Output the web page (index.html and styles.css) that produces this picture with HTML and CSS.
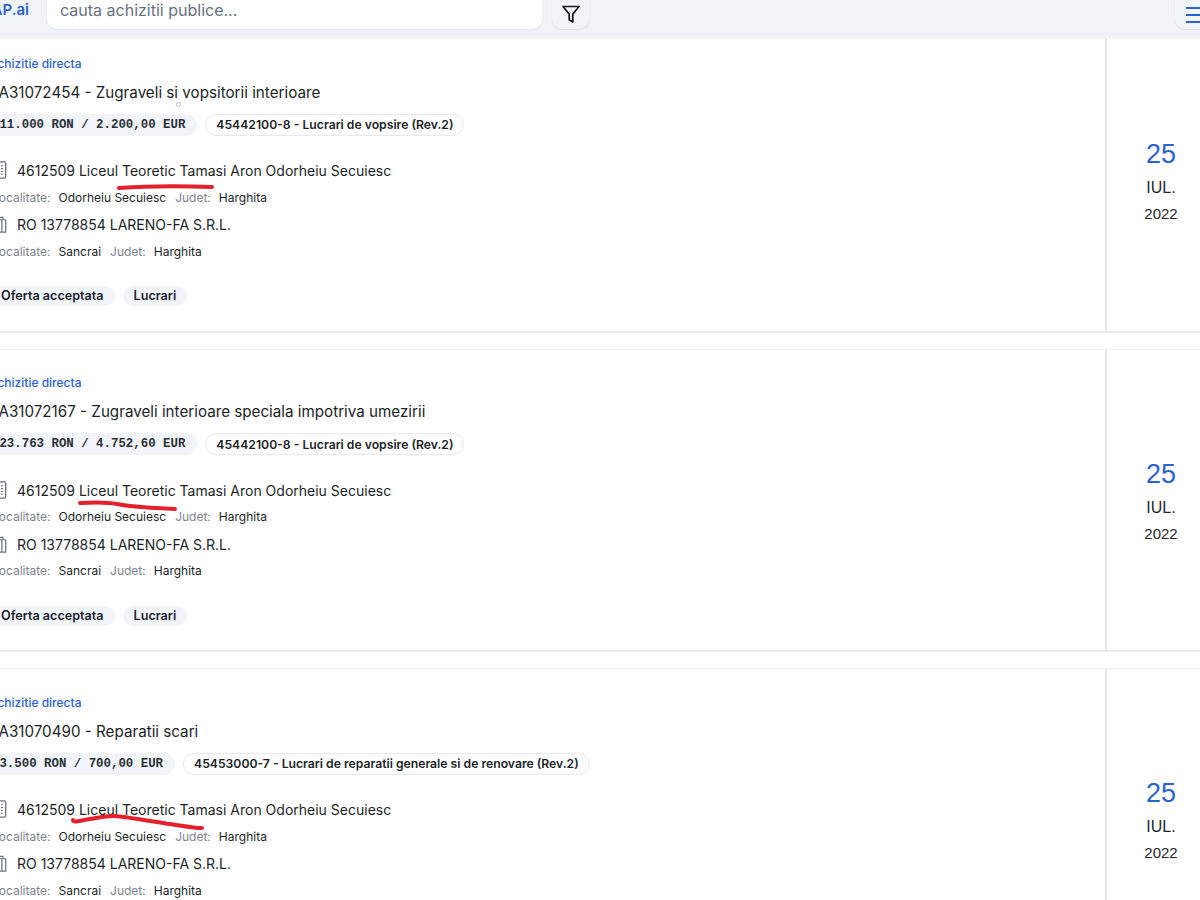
FILE: index.html
```html
<!DOCTYPE html>
<html lang="ro">
<head>
<meta charset="utf-8">
<title>SEAP.ai</title>
<link rel="stylesheet" href="styles.css">
</head>
<body>
<div class="page">
  <svg width="0" height="0" class="defs">
    <symbol id="i-building" viewBox="0 0 14 20"><rect x="1" y="1" width="12" height="17" rx="1.5" fill="none" stroke="currentColor" stroke-width="1.4"/><path d="M8 5h2M8 8h2M8 11h2M8 14h2" stroke="currentColor" stroke-width="1.2"/></symbol>
    <symbol id="i-case" viewBox="0 0 14 20"><path d="M4 5V2.500h6V5M1 5h12v13H1zM9 5v13" fill="none" stroke="currentColor" stroke-width="1.3"/></symbol>
  </svg>
  <header class="topbar">
    <div class="logo">SEAP.ai</div>
    <div class="search">cauta achizitii publice...</div>
    <button class="iconbtn filter" aria-label="filtru">
      <svg width="20" height="20" viewBox="0 0 20 20"><path d="M2 1.500h16l-6.200 7.600v7.800l-3.600-2.200V9.100z" fill="none" stroke="#15191f" stroke-width="1.700" stroke-linejoin="round"/></svg>
    </button>
    <button class="iconbtn menu" aria-label="meniu">
      <svg width="24" height="20" viewBox="0 0 24 20"><path d="M0 3h24M0 10h24M0 17h24" stroke="#2b62d0" stroke-width="2"/></svg>
    </button>
  </header>

  <main class="list">
    <article class="card">
      <div class="main">
        <div class="kind">Achizitie directa</div>
        <h2 class="title">DA31072454 - Zugraveli si vopsitorii interioare</h2>
        <div class="pills"><span class="price"><span class="pad">2</span>11.000 RON / 2.200,00 EUR</span><span class="cpv">45442100-8 - Lucrari de vopsire (Rev.2)</span></div>
        <div class="party first"><svg class="pi b"><use href="#i-building"/></svg>4612509 Liceul Teoretic Tamasi Aron Odorheiu Secuiesc</div>
        <div class="loc"><span class="k">Localitate:</span><span class="v">Odorheiu Secuiesc</span><span class="k">Judet:</span><span class="v">Harghita</span></div>
        <div class="party"><svg class="pi"><use href="#i-case"/></svg>RO 13778854 LARENO-FA S.R.L.</div>
        <div class="loc"><span class="k">Localitate:</span><span class="v">Sancrai</span><span class="k">Judet:</span><span class="v">Harghita</span></div>
        <div class="tags"><span class="tag">Oferta acceptata</span><span class="tag">Lucrari</span></div>
        <span class="ring"></span>
        <svg class="scribble s1" width="110" height="12" viewBox="0 0 110 12"><path d="M3 8C30 6 70 6 96 7" fill="none"/></svg>
      </div>
      <div class="date"><span class="day">25</span><span class="mon">IUL.</span><span class="yr">2022</span></div>
    </article>

    <article class="card">
      <div class="main">
        <div class="kind">Achizitie directa</div>
        <h2 class="title">DA31072167 - Zugraveli interioare speciala impotriva umezirii</h2>
        <div class="pills"><span class="price"><span class="pad">2</span>23.763 RON / 4.752,60 EUR</span><span class="cpv">45442100-8 - Lucrari de vopsire (Rev.2)</span></div>
        <div class="party first"><svg class="pi b"><use href="#i-building"/></svg>4612509 Liceul Teoretic Tamasi Aron Odorheiu Secuiesc</div>
        <div class="loc"><span class="k">Localitate:</span><span class="v">Odorheiu Secuiesc</span><span class="k">Judet:</span><span class="v">Harghita</span></div>
        <div class="party"><svg class="pi"><use href="#i-case"/></svg>RO 13778854 LARENO-FA S.R.L.</div>
        <div class="loc"><span class="k">Localitate:</span><span class="v">Sancrai</span><span class="k">Judet:</span><span class="v">Harghita</span></div>
        <div class="tags"><span class="tag">Oferta acceptata</span><span class="tag">Lucrari</span></div>
        <svg class="scribble s2" width="110" height="14" viewBox="0 0 110 14"><path d="M3 4C20 3 30 3 40 5S75 9 98 10" fill="none"/></svg>
      </div>
      <div class="date"><span class="day">25</span><span class="mon">IUL.</span><span class="yr">2022</span></div>
    </article>

    <article class="card">
      <div class="main">
        <div class="kind">Achizitie directa</div>
        <h2 class="title">DA31070490 - Reparatii scari</h2>
        <div class="pills"><span class="price"><span class="pad">2</span>3.500 RON / 700,00 EUR</span><span class="cpv">45453000-7 - Lucrari de reparatii generale si de renovare (Rev.2)</span></div>
        <div class="party first"><svg class="pi b"><use href="#i-building"/></svg>4612509 Liceul Teoretic Tamasi Aron Odorheiu Secuiesc</div>
        <div class="loc"><span class="k">Localitate:</span><span class="v">Odorheiu Secuiesc</span><span class="k">Judet:</span><span class="v">Harghita</span></div>
        <div class="party"><svg class="pi"><use href="#i-case"/></svg>RO 13778854 LARENO-FA S.R.L.</div>
        <div class="loc"><span class="k">Localitate:</span><span class="v">Sancrai</span><span class="k">Judet:</span><span class="v">Harghita</span></div>
        <div class="tags"><span class="tag">Oferta acceptata</span><span class="tag">Lucrari</span></div>
        <svg class="scribble s3" width="140" height="22" viewBox="0 0 140 22"><path d="M3 11C3 14 8 12 20 10S35 7 43 7 80 12 100 15 125 19 132 19" fill="none"/></svg>
      </div>
      <div class="date"><span class="day">25</span><span class="mon">IUL.</span><span class="yr">2022</span></div>
    </article>
  </main>
</div>
</body>
</html>
```

FILE: styles.css
```css
html, body {
  margin: 0;
  height: 900px;
  overflow: hidden;
  background: #fff;
}

.defs { display: block; }

.page {
  width: 1226px;
  margin-left: -11px;
  font-family: Inter, "Liberation Sans", sans-serif;
  color: #1b1f27;
}

.topbar {
  position: relative;
  z-index: 2;
  margin-top: -14px;
  height: 53px;
  display: flex;
  align-items: flex-start;
  background: #f0f4f8;
}

.logo {
  display: flex;
  justify-content: flex-end;
  width: 58px;
  box-sizing: border-box;
  padding: 12px 18px 0 0;
  font-size: 15px;
  line-height: 24px;
  font-weight: 600;
  color: #2b62d0;
  white-space: nowrap;
  flex: none;
}

.search {
  width: 495px;
  height: 43px;
  box-sizing: border-box;
  flex: none;
  background: #fff;
  border-radius: 10px;
  padding: 12px 13px 0;
  font-size: 16px;
  line-height: 24px;
  color: #66717f;
  box-shadow: 0 1px 2px rgba(20, 40, 70, .08);
}

.iconbtn {
  height: 43px;
  box-sizing: border-box;
  border: 0;
  padding: 0;
  flex: none;
  background: #f2f5f8;
  border-radius: 10px;
  box-shadow: 0 1px 2px rgba(20, 40, 70, .1);
}

.iconbtn svg { display: block; }

.filter {
  width: 37px;
  margin-left: 10px;
  padding: 14px 0 0 9px;
}

.menu {
  width: 40px;
  margin-left: 586px;
  padding: 14px 0 0 11px;
}

.list {
  display: flex;
  flex-direction: column;
  gap: 17px;
  margin-top: -9px;
  position: relative;
}

.card {
  display: flex;
  height: 302.5px;
  box-sizing: border-box;
  border-bottom: 2px solid #ebebed;
  box-shadow: 0 -1px 0 #f2f2f3;
}

.main {
  position: relative;
  width: 1118px;
  box-sizing: border-box;
  flex: none;
  padding: 25.500px 0 0 2px;
  border-right: 2px solid #e5e5e7;
}

.kind {
  margin-left: -2px;
  font-size: 12px;
  line-height: 16px;
  font-weight: 500;
  color: #2b62d0;
}

.title {
  margin: 9px 0 0 -3px;
  font-size: 15.200px;
  line-height: 24px;
  font-weight: 400;
  color: #1b1f27;
}

.pills {
  display: flex;
  gap: 8px;
  margin-top: 9px;
  height: 22px;
}

.price {
  display: flex;
  align-items: center;
  padding: 0 12px 0 1px;
  background: #f1f5f9;
  border-radius: 11px;
  font-family: "Liberation Mono", monospace;
  font-size: 12.400px;
  font-weight: 700;
  color: #2a3038;
}

.pad { visibility: hidden; }

.cpv {
  display: flex;
  align-items: center;
  padding: 0 10px;
  background: #fff;
  border: 1px solid #e6e9ee;
  border-radius: 11px;
  font-size: 12.200px;
  font-weight: 600;
  color: #1b1f27;
}

.party {
  display: flex;
  align-items: center;
  margin-top: 7.500px;
  height: 21px;
  font-size: 14px;
  color: #1b1f27;
}

.party.first { margin-top: 24.500px; }

.pi {
  width: 14px;
  height: 19px;
  margin-right: 10px;
  margin-left: 2px;
  color: #6b7480;
  flex: none;
}

.loc {
  display: flex;
  margin-top: 7.500px;
  margin-left: 1px;
  height: 18px;
  font-size: 12px;
  line-height: 18px;
}

.k { color: #7c838d; margin-right: 8px; }
.v { color: #1b1f27; margin-right: 9px; }

.tags {
  display: flex;
  gap: 8px;
  margin: 25.500px 0 0 -1px;
}

.tag {
  height: 20px;
  padding: 0 11px;
  background: #f1f5f9;
  border-radius: 10px;
  font-size: 12.600px;
  line-height: 20px;
  font-weight: 600;
  color: #1b2230;
}

.ring {
  position: absolute;
  left: 187px;
  top: 72px;
  width: 3px;
  height: 3px;
  border: 1px solid #b9bec5;
  border-radius: 50%;
}

.scribble {
  position: absolute;
  overflow: visible;
}

.scribble path {
  stroke: #e3202c;
  stroke-width: 4;
  stroke-linecap: round;
  stroke-linejoin: round;
}

.s1 { left: 127px; top: 150px; }
.s2 { left: 88px; top: 149.500px; }
.s3 { left: 81px; top: 140px; }

.date {
  flex: 1;
  display: flex;
  flex-direction: column;
  align-items: center;
  justify-content: center;
  padding-top: 2px;
  font-family: "Liberation Sans", sans-serif;
}

.day {
  font-size: 27px;
  line-height: 32px;
  color: #2b62d0;
}

.mon {
  font-size: 16px;
  line-height: 20px;
  margin-top: 8px;
  color: #24282e;
}

.yr {
  font-size: 15px;
  line-height: 20px;
  margin-top: 6px;
  color: #24282e;
}
```
